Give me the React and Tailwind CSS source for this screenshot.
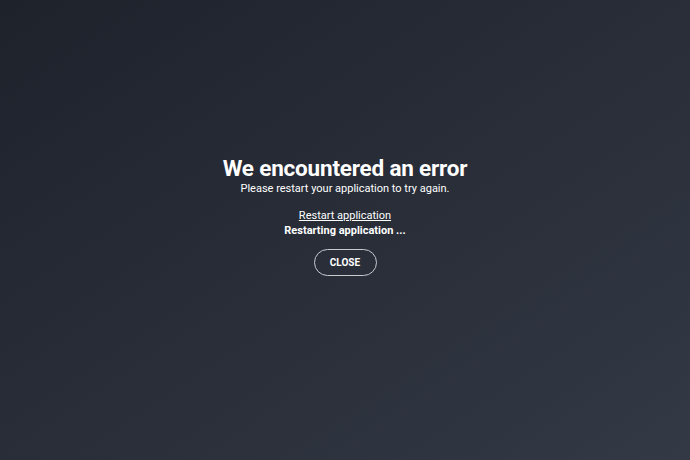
import React from "react";

const App = () => {
  return (
    <div
      className="w-full h-screen flex flex-col items-center justify-center text-white bg-gradient-to-br from-[#1e222b] to-[#333945] pb-[30px]"
      style={{ fontFamily: "Roboto, 'Liberation Sans', sans-serif" }}
    >
      <h1 className="text-[22.5px] leading-[26px] font-bold tracking-[-0.2px]">We encountered an error</h1>
      <p className="text-[11px] leading-[14px] mt-[1px]">Please restart your application to try again.</p>
      <div className="flex flex-col items-center mt-[13px]">
        <a href="#" className="text-[11px] leading-[14px] underline">
          Restart application
        </a>
        <span className="text-[11px] leading-[14px] mt-[1px] font-bold">Restarting application ...</span>
      </div>
      <button className="mt-[11px] w-[63px] h-[27px] rounded-full border border-[#c8cbd0] text-[10px] font-bold">
        CLOSE
      </button>
    </div>
  );
};

export default App;
